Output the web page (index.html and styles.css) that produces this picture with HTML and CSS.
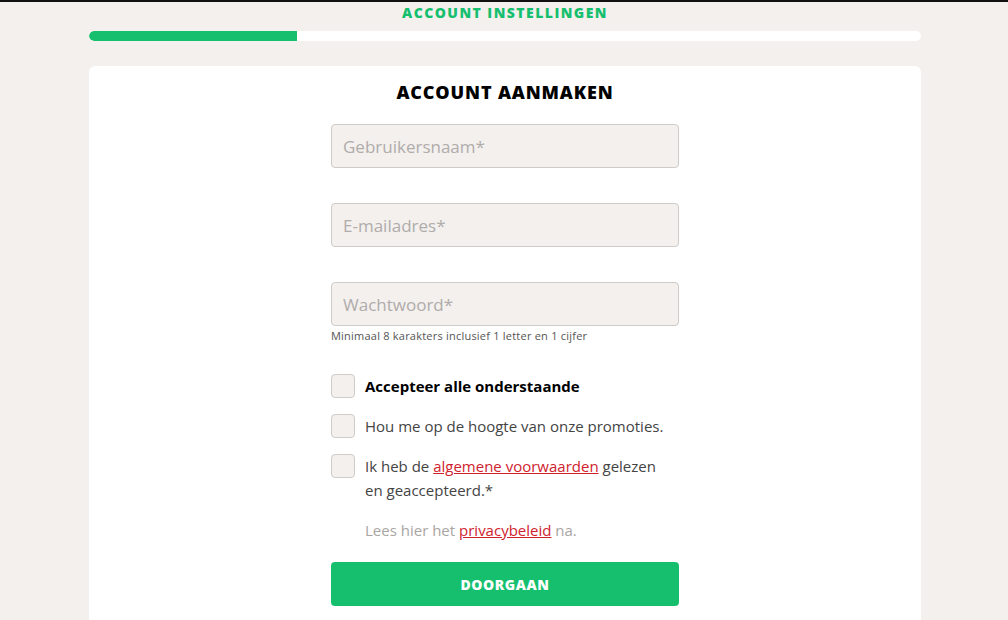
FILE: index.html
```html
<!DOCTYPE html>
<html lang="nl">
<head>
<meta charset="utf-8">
<title>Account aanmaken</title>
<link rel="stylesheet" href="styles.css">
</head>
<body>
<div class="topline"></div>
<main class="page">
  <header class="steps">
    <h2 class="step-title">ACCOUNT INSTELLINGEN</h2>
    <div class="progress"><div class="progress-fill" style="width:25%"></div></div>
  </header>
  <section class="card">
    <h1 class="card-title">ACCOUNT AANMAKEN</h1>
    <form class="form">
      <div class="field"><input class="input" type="text" placeholder="Gebruikersnaam*"></div>
      <div class="field"><input class="input" type="email" placeholder="E-mailadres*"></div>
      <div class="field">
        <input class="input" type="password" placeholder="Wachtwoord*">
        <p class="hint">Minimaal 8 karakters inclusief 1 letter en 1 cijfer</p>
      </div>
      <div class="checks">
        <label class="check"><span class="box"></span><span class="check-text strong">Accepteer alle onderstaande</span></label>
        <label class="check"><span class="box"></span><span class="check-text">Hou me op de hoogte van onze promoties.</span></label>
        <label class="check"><span class="box"></span><span class="check-text">Ik heb de <a href="#" class="link">algemene voorwaarden</a> gelezen en geaccepteerd.*</span></label>
        <p class="privacy">Lees hier het <a href="#" class="link">privacybeleid</a> na.</p>
      </div>
      <button type="button" class="btn">DOORGAAN</button>
    </form>
  </section>
</main>
</body>
</html>
```
FILE: styles.css
```css
* { box-sizing: border-box; }
html, body { margin: 0; padding: 0; }
body {
  background: #f3f0ee;
  font-family: "Open Sans", "DejaVu Sans", sans-serif;
  color: #333;
  height: 620px;
  overflow: hidden;
}
.topline { height: 2px; background: #111; }
.page { width: 832px; margin: 0 87px 0 89px; }
.steps { padding-top: 2px; }
.step-title {
  margin: 0;
  text-align: center;
  color: #16bf6e;
  font-size: 14px;
  font-weight: 800;
  letter-spacing: 1.45px;
  line-height: 17px;
}
.progress {
  margin-top: 10px;
  height: 10px;
  background: #fff;
  border-radius: 5px;
  overflow: hidden;
}
.progress-fill { height: 100%; background: #16bf6e; border-radius: 5px 0 0 5px; }
.card {
  margin-top: 25px;
  background: #fff;
  border-radius: 6px 6px 0 0;
  padding: 14px 0 0;
  height: 554px;
}
.card-title {
  margin: 0;
  text-align: center;
  font-size: 18px;
  font-weight: 800;
  color: #000;
  line-height: 24px;
  letter-spacing: 0.85px;
}
.form { width: 348px; margin: 20px auto 0; }
.field { margin-bottom: 35px; }
.input {
  display: block;
  width: 100%;
  height: 44px;
  background: #f3f0ee;
  border: 1px solid #cfcbc9;
  border-radius: 4px;
  padding: 0 11px;
  font-family: inherit;
  font-size: 17px;
  color: #333;
}
.input::placeholder { color: #b0acaa; }
.field:nth-child(3) { margin-bottom: 0; }
.hint { margin: 3px 0 0; font-size: 11px; color: #555; line-height: 14px; letter-spacing: 0.22px; }
.checks { margin-top: 31px; display: flex; flex-direction: column; gap: 16px; }
.check { display: flex; gap: 10px; align-items: flex-start; }
.box {
  flex: none;
  width: 24px; height: 24px;
  background: #f3f0ee;
  border: 1px solid #cfcbc9;
  border-radius: 4px;
}
.check-text { font-size: 15px; line-height: 24px; color: #444; max-width: 302px; }
.check-text.strong { font-weight: 700; color: #000; }
.link { color: #d0222e; text-decoration: underline; }
.privacy { margin: 0 0 0 34px; font-size: 15px; line-height: 24px; color: #a9a5a3; }
.btn {
  display: block;
  width: 100%;
  margin-top: 20px;
  height: 44px;
  border: 0;
  border-radius: 4px;
  background: #16bf6e;
  color: #fff;
  font-family: inherit;
  font-size: 14px;
  font-weight: 800;
  letter-spacing: 0.6px;
}
```
